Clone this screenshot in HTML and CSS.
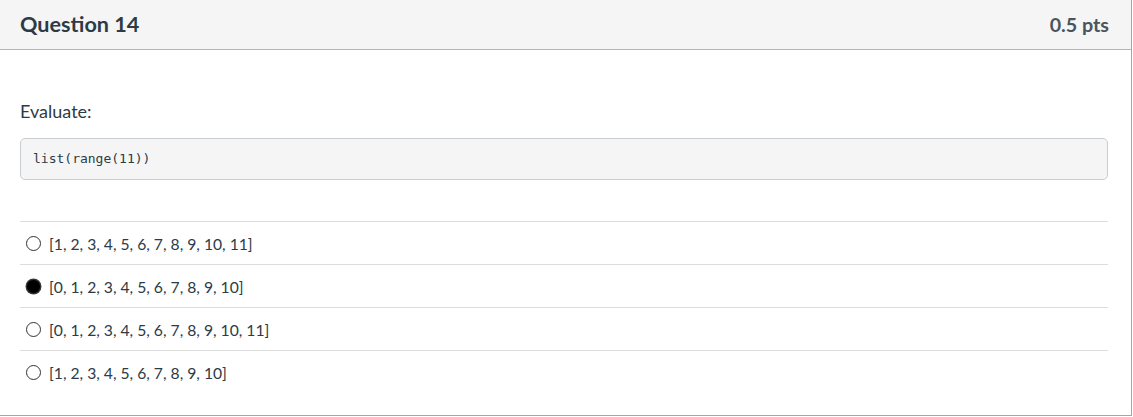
FILE: index.html
```html
<!DOCTYPE html>
<html>
<head>
<meta charset="utf-8">
<link rel="stylesheet" href="styles.css">
</head>
<body>
<div class="question">
  <div class="header">
    <span class="title">Question 14</span>
    <span class="points">0.5 pts</span>
  </div>
  <div class="content">
    <p class="prompt">Evaluate:</p>
    <pre class="code">list(range(11))</pre>
    <div class="answers">
      <label class="answer"><span class="radio"></span><span class="text">[1, 2, 3, 4, 5, 6, 7, 8, 9, 10, 11]</span></label>
      <label class="answer"><span class="radio checked"></span><span class="text">[0, 1, 2, 3, 4, 5, 6, 7, 8, 9, 10]</span></label>
      <label class="answer"><span class="radio"></span><span class="text">[0, 1, 2, 3, 4, 5, 6, 7, 8, 9, 10, 11]</span></label>
      <label class="answer"><span class="radio"></span><span class="text">[1, 2, 3, 4, 5, 6, 7, 8, 9, 10]</span></label>
    </div>
  </div>
</div>
</body>
</html>
```
FILE: styles.css
```css
html, body {
  margin: 0;
  padding: 0;
  background: #fff;
}
body {
  font-family: Lato, "Open Sans", sans-serif;
  color: #2d3b45;
}
.question {
  width: 1131px;
  height: 415px;
  border-right: 1px solid #a5a5a5;
  border-bottom: 1px solid #a5a5a5;
  display: flex;
  flex-direction: column;
}
.header {
  height: 50px;
  box-sizing: border-box;
  background: #f5f5f5;
  border-bottom: 1px solid #b5b5b5;
  display: flex;
  align-items: center;
  justify-content: space-between;
  padding: 0 22px 1px 20px;
}
.title {
  font-size: 21.6px;
  font-weight: 700;
}
.points {
  font-size: 19.7px;
  font-weight: 700;
  color: #4a545b;
}
.content {
  padding: 0 23px 0 20px;
}
.prompt {
  margin: 0;
  padding-top: 50px;
  font-size: 18px;
  line-height: 22px;
}
.code {
  margin: 16px 0 0;
  height: 40px;
  box-sizing: content-box;
  background: #f5f5f5;
  border: 1px solid #c7cdd1;
  border-radius: 5px;
  font-family: "DejaVu Sans Mono", monospace;
  font-size: 13px;
  line-height: 40px;
  padding: 0 12px;
  color: #2d3b45;
}
.answers {
  margin-top: 41px;
}
.answer {
  display: flex;
  align-items: center;
  height: 43px;
  box-sizing: border-box;
  border-top: 1px solid #dddddd;
  font-size: 15.7px;
  padding-left: 6px;
  padding-top: 1px;
}
.radio {
  width: 13px;
  height: 13px;
  border: 1px solid #333;
  border-radius: 50%;
  margin-right: 8px;
  flex: none;
}
.radio.checked {
  background: #000;
  box-shadow: 0 0 0 0.5px #444;
}
```
